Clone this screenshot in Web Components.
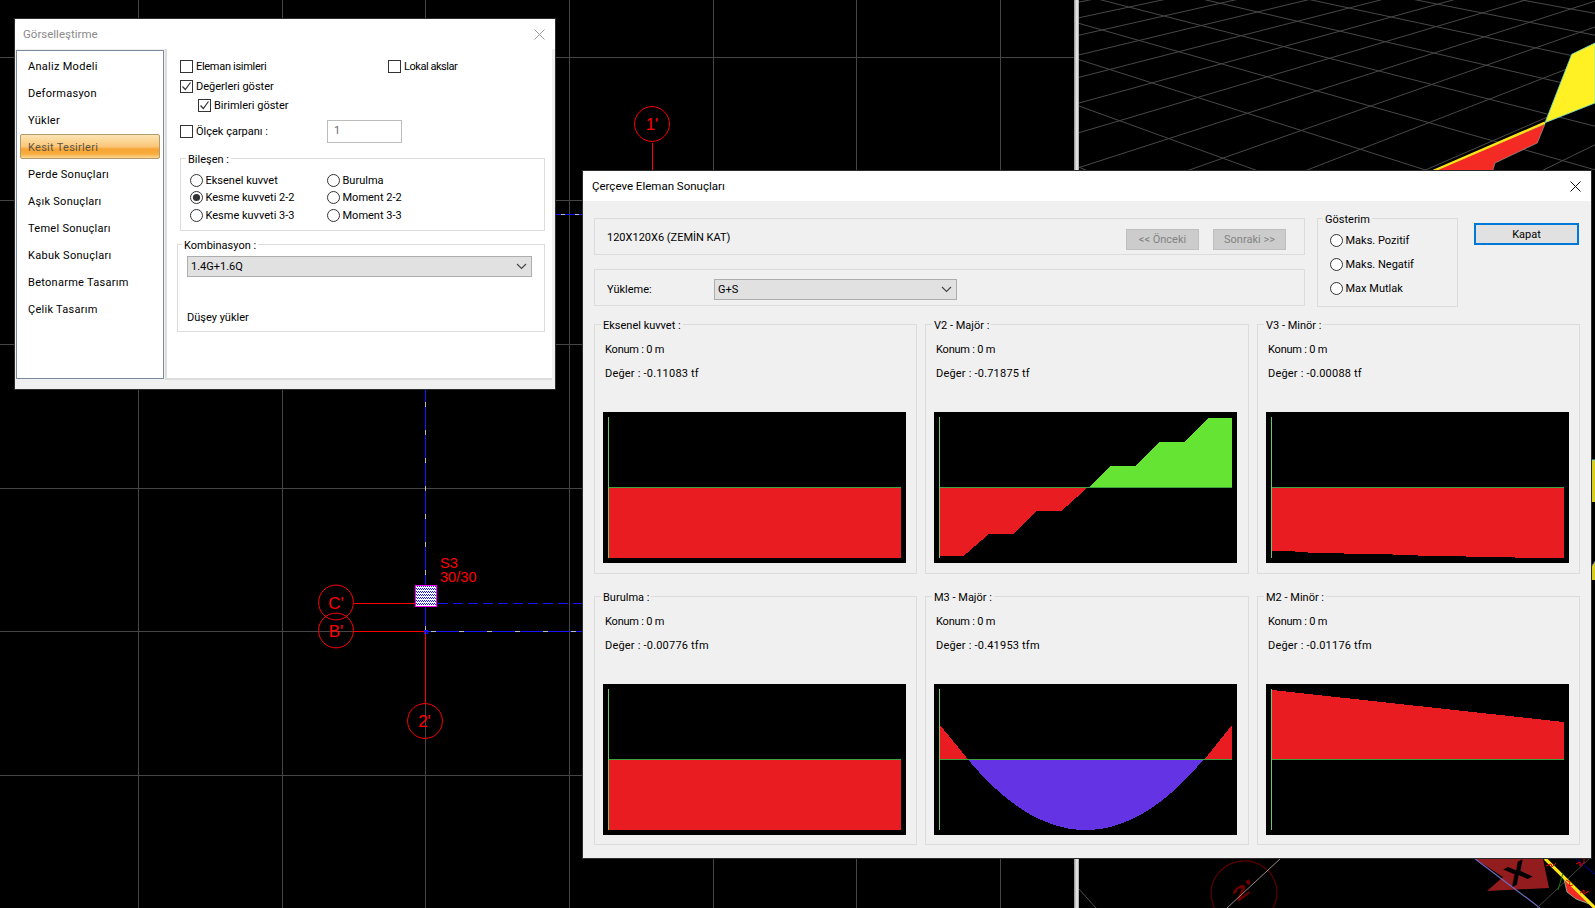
<!DOCTYPE html>
<html lang="tr"><head><meta charset="utf-8"><title>Görselleştirme</title>
<style>
html,body{margin:0;padding:0;background:#000;overflow:hidden}
body{width:1595px;height:908px;font:11px Roboto,"Liberation Sans",sans-serif;color:#000}
</style></head><body>
<cad-desktop>
  <win-dialog left="15" top="19" width="540" height="370" heading="Görselleştirme" inactive>
    <div style="display:flex;height:331px;--group-bg:#fff">
      <nav-list>
        <nav-item>Analiz Modeli</nav-item><nav-item>Deformasyon</nav-item><nav-item>Yükler</nav-item>
        <nav-item selected>Kesit Tesirleri</nav-item><nav-item>Perde Sonuçları</nav-item><nav-item>Aşık Sonuçları</nav-item>
        <nav-item>Temel Sonuçları</nav-item><nav-item>Kabuk Sonuçları</nav-item><nav-item>Betonarme Tasarım</nav-item><nav-item>Çelik Tasarım</nav-item>
      </nav-list>
      <view-options></view-options>
    </div>
  </win-dialog>
  <win-dialog left="583" top="171" width="1008" height="687" heading="Çerçeve Eleman Sonuçları">
    <frame-results></frame-results>
  </win-dialog>
</cad-desktop>
<script>
const FONT='Roboto,"Liberation Sans",sans-serif';
function comp(name,css,html,init){
  customElements.define(name,class extends HTMLElement{
    constructor(){super();this.attachShadow({mode:'open'});}
    connectedCallback(){
      const h=typeof html==='function'?html(this):html;
      this.shadowRoot.innerHTML='<style>'+(typeof css==='function'?css(this):css)+'</style>'+h;
      if(init)init(this);
    }
  });
}
const chev='<svg width="11" height="7" viewBox="0 0 11 7"><path d="M1 1l4.5 4.5L10 1" fill="none" stroke="#444" stroke-width="1.1"/></svg>';

function homography(src,dst){
  const A=[];
  for(let k=0;k<4;k++){const[u,v]=src[k],[x,y]=dst[k];
    A.push([u,v,1,0,0,0,-u*x,-v*x,x]);A.push([0,0,0,u,v,1,-u*y,-v*y,y]);}
  for(let c=0;c<8;c++){let p=c;for(let r=c;r<8;r++)if(Math.abs(A[r][c])>Math.abs(A[p][c]))p=r;
    [A[c],A[p]]=[A[p],A[c]];
    for(let r=0;r<8;r++)if(r!==c){const f=A[r][c]/A[c][c];for(let k=c;k<9;k++)A[r][k]-=f*A[c][k];}}
  const h=A.map((r,i)=>r[8]/r[i]);
  return(u,v)=>{const w=h[6]*u+h[7]*v+1;return[(h[0]*u+h[1]*v+h[2])/w,(h[3]*u+h[4]*v+h[5])/w];};
}
function gridLines(){
  const m=homography([[0,0],[7,0],[4,2],[4,-2]],[[1102.1,30],[1428.9,122.7],[1119.5,120.7],[1385.4,41.7]]);
  let s='';
  const seg=(a,b)=>'<line x1="'+a[0].toFixed(1)+'" y1="'+a[1].toFixed(1)+'" x2="'+b[0].toFixed(1)+'" y2="'+b[1].toFixed(1)+'"/>';
  for(let j=-7;j<=6;j++)s+=seg(m(-8,j),m(22,j));
  for(let i=-8;i<=22;i++)s+=seg(m(i,-7),m(i,6));
  return s;
}
function dashes(x1,y1,x2,y2,step,len,offset){
  let s='';
  if(y1===y2){for(let x=x1+offset;x<x2;x+=step)s+='M'+x+' '+y1+'h'+len;}
  else{for(let y=y1+offset;y<y2;y+=step)s+='M'+x1+' '+y+'v'+len;}
  return s;
}
comp('cad-desktop',
`:host{display:block;position:relative;width:1595px;height:908px;background:#000;overflow:hidden}
 svg{position:absolute;left:0;top:0}
 text{font-family:"Liberation Sans",sans-serif;fill:#f00}
 .divider{position:absolute;left:1074px;top:0;width:5px;height:908px;background:linear-gradient(90deg,#8d8d8d,#dedede 45%,#f4f4f4 60%,#9a9a9a)}`,
()=>{
  const vs=[138.5,282.5,425.5,569.5,713.5,856.5,1000.5];
  const hs=[57.5,200.5,344.5,488.5,631.5,775.5];
  let g='';
  vs.forEach(x=>g+='<line x1="'+x+'" y1="0" x2="'+x+'" y2="908"/>');
  hs.forEach(y=>g+='<line x1="0" y1="'+y+'" x2="1074" y2="'+y+'"/>');
  return `<svg width="1595" height="908" viewBox="0 0 1595 908">
  <defs>
   <clipPath id="c3"><rect x="1079" y="0" width="516" height="172"/></clipPath>
   <pattern id="hatch" width="2" height="3" patternUnits="userSpaceOnUse"><rect width="2" height="3" fill="#fff"/><rect width="1" height="1" fill="#1010f0"/><rect x="1" y="1" width="1" height="1" fill="#1010f0"/></pattern>
  </defs>
  <g stroke="#454545" stroke-width="1" shape-rendering="crispEdges">${g}</g>
  <g clip-path="url(#c3)" stroke="#484848" stroke-width="1" fill="none">${gridLines()}</g>
  <g shape-rendering="crispEdges" fill="none" stroke-width="1">
   <path d="M425.5 389V585M425.5 607V631" stroke="#1414ff"/>
   <path d="${dashes(425.5,389,425.5,631,28,5,13)}" stroke="#bdbdbd"/>
   <path d="M425 631.5H583M555 214.5H583" stroke="#1414ff"/>
   <path d="${dashes(425,631.5,583,631.5,28,5,6)}${dashes(558,214.5,583,214.5,14,4,3)}" stroke="#bdbdbd"/>
   <path d="${dashes(437,603.5,583,603.5,15,10,1)}" stroke="#1414ff"/>
   <path d="M354 603.5H415M354 631.5H425M425.5 632V703M652.5 143V171" stroke="#f00"/>
  </g>
  <rect x="415" y="585" width="22" height="22" fill="#f0f" shape-rendering="crispEdges"/>
  <rect x="416" y="586" width="20" height="20" fill="url(#hatch)" shape-rendering="crispEdges"/>
  <rect x="424" y="630" width="3" height="3" fill="none" stroke="#1414ff" stroke-width="1" shape-rendering="crispEdges"/>
  <g fill="none" stroke="#f00" stroke-width="1">
   <circle cx="336" cy="602.5" r="17.4"/><circle cx="336" cy="630.5" r="17.4"/><circle cx="425" cy="721" r="17.4"/><circle cx="652" cy="124" r="17.4"/>
  </g>
  <g font-size="17" text-anchor="middle">
   <text x="336" y="608.5">C'</text><text x="336" y="636.5">B'</text><text x="424.5" y="727">2'</text><text x="652" y="130">1'</text>
  </g>
  <g font-size="14.6"><text x="440" y="567.5">S3</text><text x="440" y="581.5">30/30</text></g>
  <path d="M1571.7 54.3L1595 43V103L1545 122.7Z" fill="#fff124" stroke="#6fe0d0" stroke-width=".8"/>
  <path d="M1433 171L1545 124L1537.3 143L1495 163L1492.7 171Z" fill="#f42a24" stroke="#9cc" stroke-width=".5"/>
  <path d="M1433 171L1545 122.7" stroke="#ffe516" stroke-width="2.4" fill="none"/>
  <path d="M1591 460H1595V502H1591Z" fill="#d8cc1e"/>
  <path d="M1591 460H1595" stroke="#6fe0d0"/>
  <path d="M1595 561L1591 567V580H1595Z" fill="#d8cc1e"/><path d="M1595 561L1591 567" stroke="#4a4aa0"/>
  <g fill="none">
   <path d="M1079 889L1096 908" stroke="#4a4a4a"/>
   <g transform="rotate(-12 1244 893)"><ellipse cx="1244" cy="893" rx="33" ry="32" stroke="#5c0000" stroke-width="1.2"/></g>
  </g>
  <text font-size="24" font-weight="bold" text-anchor="middle" style="fill:#700000" transform="translate(1247 895) rotate(-36) scale(1.25,.72)">2'</text>
  <path d="M1227 908L1281 858" stroke="#9a8a8a" fill="none"/>
  <path d="M1475 858.7H1543L1549 888L1487 891L1503 877Z" fill="#921c1e"/>
  <text font-size="34" font-weight="bold" text-anchor="middle" style="fill:#000" transform="translate(1522 882) rotate(-28) scale(1.05,.85)">X</text>
  <path d="M1475 858.7L1540 908" stroke="#6c6cc0" stroke-width="1.2"/>
  <path d="M1537 908L1590 858" stroke="#444"/>
  <path d="M1575 858L1595 874" stroke="#00006e" stroke-width="1.2"/>
  <path d="M1563 875L1592 905L1576 899L1567 892Z" fill="#f42a24" stroke="#7fc9a8" stroke-width=".8"/>
  <path d="M1545 858.7L1595 908" stroke="#ffe516" stroke-width="3.2"/>
  <path d="M1558 890L1563 873" stroke="#0a7a1e"/>
  <path d="M1546 866l5-2 1 3 4-4M1576 864l4-2 0 4 4-3 0-4M1566 880l4 2-1 4 4-1M1580 893l4-3 0 4 5-3" fill="none" stroke="#e00" stroke-width="1"/>
  </svg><div class="divider"></div><slot></slot>`;
});
comp('win-dialog',
t=>`:host{display:flex;flex-direction:column;position:absolute;left:${t.getAttribute('left')}px;top:${t.getAttribute('top')}px;width:${t.getAttribute('width')}px;height:${t.getAttribute('height')}px;background:#f0f0f0;box-shadow:0 0 0 1px #2c2c2c;font:11px ${FONT};color:#000;--group-bg:#f0f0f0}
 header{flex:none;height:30px;background:#fff;display:flex;align-items:center;justify-content:space-between;padding:0 10px 0 9px;font-size:11.5px}
 .inactive{color:#8a8a8a;padding-left:8px}
 svg{display:block}`,
t=>{const ina=t.hasAttribute('inactive');const c=ina?'#9a9a9a':'#111';
 return `<header class="${ina?'inactive':''}"><span>${t.getAttribute('heading')}</span><svg width="11" height="11" viewBox="0 0 11 11"><path d="M.5.5l10 10M10.5.5l-10 10" stroke="${c}" fill="none"/></svg></header><slot></slot>`;});
comp('nav-list',`:host{display:block;flex:none;box-sizing:border-box;width:148px;height:329px;margin:1px 1px 0 1px;background:#fff;border:1px solid #7d8a9e;padding-top:1px}`,'<slot></slot>');
comp('nav-item',
t=>`:host{display:block;box-sizing:border-box;height:27px;padding:1px 3px}
 div{box-sizing:border-box;height:25px;padding-left:8px;line-height:27px;letter-spacing:.28px}
 div.s{padding-left:7px;line-height:25px;border:1px solid #b59a6b;border-radius:2px;color:#5c5548;background:linear-gradient(#fbe4b4 0,#fbd08a 35%,#fbc678 50%,#f6a534 62%,#f7ad3e 82%,#fcd795 100%)}`,
t=>`<div class="${t.hasAttribute('selected')?'s':''}"><slot></slot></div>`);
comp('win-check',
`:host{display:flex;align-items:center;gap:3px;white-space:nowrap}
 i{display:block;flex:none;box-sizing:border-box;width:13px;height:13px;border:1px solid #333;background:#fff}
 svg{display:block}`,
t=>`<i>${t.hasAttribute('checked')?'<svg width="11" height="11" viewBox="0 0 11 11"><path d="M1.5 5.5l2.8 3L9.5 1.5" fill="none" stroke="#333" stroke-width="1.2"/></svg>':''}</i><span><slot></slot></span>`);
comp('win-radio',
`:host{display:flex;align-items:center;gap:2.5px;white-space:nowrap}
 svg{display:block;flex:none}`,
t=>`<svg width="13" height="13" viewBox="0 0 13 13"><circle cx="6.5" cy="6.5" r="6" fill="#fff" stroke="#333"/>${t.hasAttribute('checked')?'<circle cx="6.5" cy="6.5" r="3.6" fill="#333"/>':''}</svg><span><slot></slot></span>`);
comp('win-group',
t=>`:host{display:block;box-sizing:border-box;border:1px solid #dcdcdc}
 .l{display:block;width:fit-content;height:15px;line-height:17px;margin:-8px 0 0 ${t.getAttribute('lx')||5}px;padding:0 2px;background:var(--group-bg);white-space:nowrap}`,
t=>`<span class="l">${t.getAttribute('label')}</span><slot></slot>`);
comp('win-combo',
t=>`:host{display:flex;align-items:center;justify-content:space-between;box-sizing:border-box;height:21px;width:${t.getAttribute('w')}px;background:#e1e1e1;border:1px solid #adadad;padding:0 4px 0 3px}`,
`<span><slot></slot></span>${chev}`);
comp('win-button',
t=>`:host{display:flex;align-items:center;justify-content:center;box-sizing:border-box;flex:none;width:${t.getAttribute('w')||73}px;height:${t.getAttribute('h')||21}px;white-space:nowrap;${t.hasAttribute('disabled')?'background:#ccc;border:1px solid #bfbfbf;color:#838383':'background:#e1e1e1;border:2px solid #0078d7;color:#000'}}`,
'<slot></slot>');
comp('view-options',
`:host{display:block;box-sizing:border-box;flex:none;width:387px;height:331px;margin-left:0;background:#fff;border-left:2px solid #dcdcdc;border-bottom:2px solid #dcdcdc;padding:7px 0 0 13px}
 .r{display:flex;align-items:center}
 .r1{height:20px}.r3{height:19px;padding-left:18px}
 .r4{height:23px;margin-top:5px}
 .c1{width:208px}.c2{width:147px}
 .inp{box-sizing:border-box;width:75px;height:23px;border:1px solid #bcbcbc;color:#6d6d6d;padding:0 6px;line-height:19px}
 .g1{display:block;width:365px;height:73px;margin-top:15px}
 .radios{display:grid;grid-template-columns:137px 1fr;grid-template-rows:17px 17px 18px;padding:6px 0 0 9px}
 .radios>*{align-self:center}
 .g2{display:block;width:368px;height:88px;margin:13px 0 0 -3px}
 win-combo{margin:4px 0 0 9px}
 .note{height:15px;line-height:15px;margin:33px 0 0 9px}`,
`<div class="r r1"><div class="c1"><win-check style="letter-spacing:-.3px">Eleman isimleri</win-check></div><win-check style="letter-spacing:-.45px">Lokal akslar</win-check></div>
 <div class="r r1"><win-check checked>Değerleri göster</win-check></div>
 <div class="r r3"><win-check checked>Birimleri göster</win-check></div>
 <div class="r r4"><div class="c2"><win-check>Ölçek çarpanı :</win-check></div><div class="inp">1</div></div>
 <win-group class="g1" label="Bileşen :"><div class="radios">
  <win-radio>Eksenel kuvvet</win-radio><win-radio>Burulma</win-radio>
  <win-radio checked>Kesme kuvveti 2-2</win-radio><win-radio>Moment 2-2</win-radio>
  <win-radio>Kesme kuvveti 3-3</win-radio><win-radio>Moment 3-3</win-radio></div></win-group>
 <win-group class="g2" lx="4" label="Kombinasyon :"><win-combo w="345">1.4G+1.6Q</win-combo><div class="note">Düşey yükler</div></win-group>`);
const RED='#e91c21',GRN='#66e433',BLU='#6434e4';
function para(){let p='';for(let i=0;i<=60;i++){const t=i/60,x=34.5+t*(269-34.5),y=76+70*4*t*(1-t);p+=x.toFixed(1)+','+y.toFixed(1)+' ';}return p;}
const SHAPES={
 a:`<polygon fill="${RED}" points="6,76 298,76 298,146 6,146"/>`,
 b:`<polygon fill="${RED}" points="6,76 153,76 127.5,99 103,99 79,122 55,122 29.5,144 6,144"/><polygon fill="${GRN}" points="155,76 176.5,54 201,54 225.5,30 250,30 274,6 298,6 298,76"/>`,
 c:`<polygon fill="${RED}" points="6,76 298,76 298,146 249,146 249,145 200,145 200,144 152,144 152,143 127,143 127,142 78,142 78,141 42,141 42,140 29,140 29,139 6,139"/>`,
 e:`<polygon fill="${RED}" points="6,41 34.5,76 6,76"/><polygon fill="${RED}" points="298,41 270,76 298,76"/><polygon fill="${BLU}" points="${para()}"/>`,
 f:`<polygon fill="${RED}" points="6,6 298,38 298,76 6,76"/>`
};
comp('result-chart',
`:host{display:block;width:303px;height:151px;background:#000}svg{display:block}`,
t=>`<svg width="303" height="151" viewBox="0 0 303 151" shape-rendering="crispEdges">${SHAPES[t.getAttribute('kind')]}
 <rect x="5" y="5" width="1" height="141" fill="#6cc76c"/><rect x="6" y="75" width="292" height="1" fill="#3ea03e"/></svg>`);
comp('result-panel',
`:host{display:block;box-sizing:border-box;height:100%;border:1px solid #dcdcdc}
 .l{display:block;width:fit-content;height:15px;line-height:17px;margin:-8px 0 0 6px;padding:0 2px;background:var(--group-bg);white-space:nowrap}
 .t{height:15px;line-height:15px;padding-left:10px}
 .k{margin-top:10px;letter-spacing:-.2px}.d{margin-top:9px;letter-spacing:.2px}
 result-chart{margin:31px 0 0 8px}`,
t=>`<span class="l">${t.getAttribute('label')}</span><div class="t k">Konum : 0 m</div><div class="t d">Değer : ${t.getAttribute('value')}</div><result-chart kind="${t.getAttribute('kind')}"></result-chart>`);
comp('frame-results',
`:host{display:block;padding:17px 0 0 11px}
 .top{display:grid;grid-template-columns:711px 141px 105px;column-gap:12px;height:89px;align-items:start}
 .top>:nth-child(3){margin-left:4px}
 .box{box-sizing:border-box;border:1px solid #dcdcdc;height:37px;display:flex;align-items:center}
 .b1{justify-content:space-between;padding:0 18px 0 12px}
 .b1>span{padding-top:2px}
 .btns{display:flex;gap:14px}
 .b2{margin-top:14px;padding:3px 0 0 12px}
 .b2 span{width:107px}
 .sh{display:block;height:89px}
 .rd{display:grid;grid-auto-rows:24px;padding:2px 0 0 12px}
 .rd>*{align-self:center}
 win-button{margin-top:5px}
 .grid{display:grid;grid-template-columns:323px 324px 323px;grid-template-rows:250px 249px;column-gap:8px;row-gap:22px;margin-top:17px}`,
`<div class="top">
  <div><div class="box b1"><span>120X120X6 (ZEMİN KAT)</span><div class="btns"><win-button disabled>&lt;&lt; Önceki</win-button><win-button disabled>Sonraki &gt;&gt;</win-button></div></div>
   <div class="box b2"><span>Yükleme:</span><win-combo w="243">G+S</win-combo></div></div>
  <win-group class="sh" label="Gösterim"><div class="rd"><win-radio>Maks. Pozitif</win-radio><win-radio>Maks. Negatif</win-radio><win-radio>Max Mutlak</win-radio></div></win-group>
  <win-button w="105" h="22">Kapat</win-button>
 </div>
 <div class="grid">
  <result-panel label="Eksenel kuvvet :" value="-0.11083 tf" kind="a"></result-panel>
  <result-panel label="V2 - Majör :" value="-0.71875 tf" kind="b"></result-panel>
  <result-panel label="V3 - Minör :" value="-0.00088 tf" kind="c"></result-panel>
  <result-panel label="Burulma :" value="-0.00776 tfm" kind="a"></result-panel>
  <result-panel label="M3 - Majör :" value="-0.41953 tfm" kind="e"></result-panel>
  <result-panel label="M2 - Minör :" value="-0.01176 tfm" kind="f"></result-panel>
 </div>`);
</script>
</body></html>
